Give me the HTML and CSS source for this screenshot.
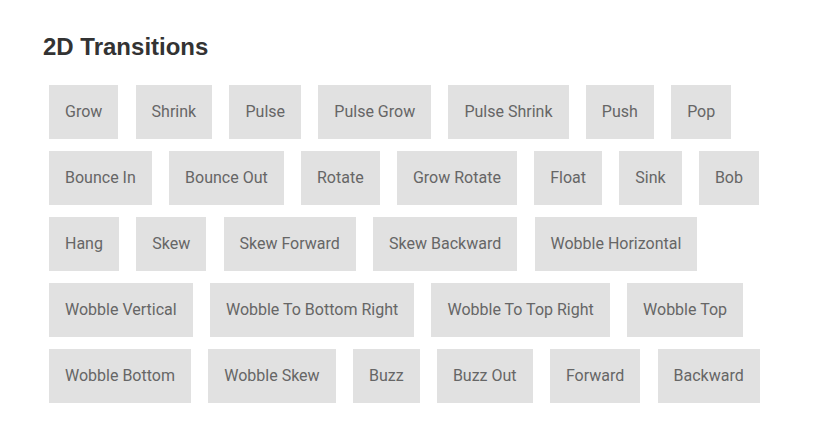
FILE: index.html
```html
<!DOCTYPE html>
<html>
<head>
<meta charset="utf-8">
<link rel="stylesheet" href="styles.css">
</head>
<body>
<div class="page">
  <h2 class="title">2D Transitions</h2>
  <div class="buttons">
    <a class="button">Grow</a>
    <a class="button">Shrink</a>
    <a class="button">Pulse</a>
    <a class="button">Pulse Grow</a>
    <a class="button">Pulse Shrink</a>
    <a class="button">Push</a>
    <a class="button">Pop</a>
    <a class="button">Bounce In</a>
    <a class="button">Bounce Out</a>
    <a class="button">Rotate</a>
    <a class="button">Grow Rotate</a>
    <a class="button">Float</a>
    <a class="button">Sink</a>
    <a class="button">Bob</a>
    <a class="button">Hang</a>
    <a class="button">Skew</a>
    <a class="button">Skew Forward</a>
    <a class="button">Skew Backward</a>
    <a class="button">Wobble Horizontal</a>
    <a class="button">Wobble Vertical</a>
    <a class="button">Wobble To Bottom Right</a>
    <a class="button">Wobble To Top Right</a>
    <a class="button">Wobble Top</a>
    <a class="button">Wobble Bottom</a>
    <a class="button">Wobble Skew</a>
    <a class="button">Buzz</a>
    <a class="button">Buzz Out</a>
    <a class="button">Forward</a>
    <a class="button">Backward</a>
  </div>
</div>
</body>
</html>
```
FILE: styles.css
```css
html, body {
  margin: 0;
  padding: 0;
  background: #ffffff;
}
.page {
  padding: 33px 0 0 43px;
  width: 760px;
}
.title {
  margin: 0;
  font-family: "Liberation Sans", Arial, sans-serif;
  font-weight: bold;
  font-size: 24px;
  line-height: 28px;
  color: #333333;
}
.buttons {
  display: flex;
  flex-wrap: wrap;
  gap: 12px 17.3px;
  margin-top: 24px;
  padding-left: 6px;
}
.button {
  display: block;
  padding: 16px;
  background: #e1e1e1;
  color: #666666;
  font-family: Roboto, "Noto Sans", sans-serif;
  font-size: 16px;
  line-height: 22px;
  text-decoration: none;
  white-space: nowrap;
}
```
